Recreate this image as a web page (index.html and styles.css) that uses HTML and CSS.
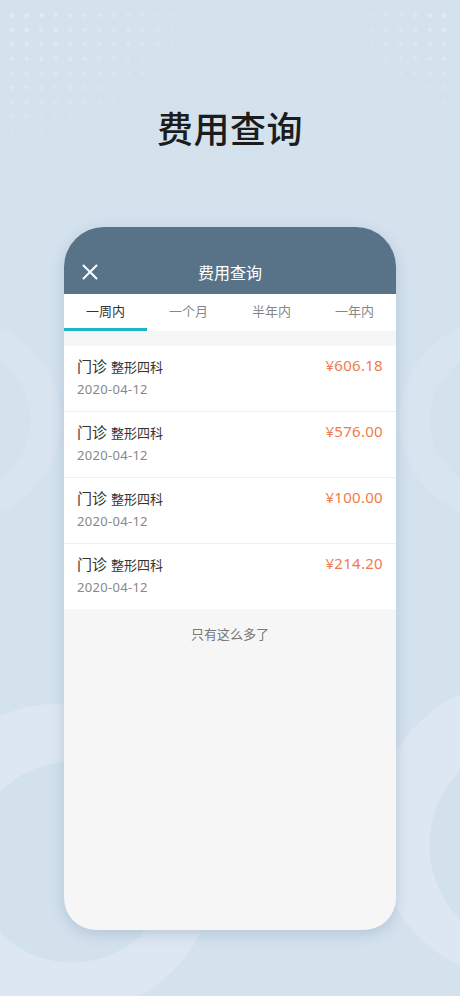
FILE: index.html
```html
<!DOCTYPE html>
<html lang="zh-CN">
<head>
<meta charset="utf-8">
<title>费用查询</title>
<link rel="stylesheet" href="styles.css">
</head>
<body>
<div class="page">
  <div class="dots dots-left"></div>
  <div class="dots dots-right"></div>
  <h1 class="hero-title">费用查询</h1>
  <div class="card">
    <div class="nav">
      <span class="nav-close">
        <svg width="16" height="16" viewBox="0 0 16 16"><path d="M1.5 1.5 L14.5 14.5 M14.5 1.5 L1.5 14.5" stroke="#fff" stroke-width="2" stroke-linecap="round" fill="none"/></svg>
      </span>
      <span class="nav-title">费用查询</span>
      <span class="nav-spacer"></span>
    </div>
    <div class="tabs">
      <div class="tab active">一周内</div>
      <div class="tab">一个月</div>
      <div class="tab">半年内</div>
      <div class="tab">一年内</div>
    </div>
    <div class="list">
      <div class="item">
        <div class="item-main">
          <div class="item-title"><span class="type">门诊</span><span class="dept">整形四科</span></div>
          <div class="item-date">2020-04-12</div>
        </div>
        <div class="price">¥606.18</div>
      </div>
      <div class="item">
        <div class="item-main">
          <div class="item-title"><span class="type">门诊</span><span class="dept">整形四科</span></div>
          <div class="item-date">2020-04-12</div>
        </div>
        <div class="price">¥576.00</div>
      </div>
      <div class="item">
        <div class="item-main">
          <div class="item-title"><span class="type">门诊</span><span class="dept">整形四科</span></div>
          <div class="item-date">2020-04-12</div>
        </div>
        <div class="price">¥100.00</div>
      </div>
      <div class="item">
        <div class="item-main">
          <div class="item-title"><span class="type">门诊</span><span class="dept">整形四科</span></div>
          <div class="item-date">2020-04-12</div>
        </div>
        <div class="price">¥214.20</div>
      </div>
    </div>
    <div class="end-note">只有这么多了</div>
  </div>
</div>
</body>
</html>
```

FILE: styles.css
```css
html, body {
  margin: 0;
  padding: 0;
}
body {
  width: 460px;
  height: 996px;
  overflow: hidden;
  font-family: "Noto Sans", "Noto Sans CJK SC", sans-serif;
  background-color: #d4e2ee;
  background-image:
    radial-gradient(circle at 72px 862px, #d3e1ed 0 100px, transparent 101px),
    radial-gradient(circle at 62px 860px, #dde7f1 0 156px, transparent 157px),
    radial-gradient(circle at 535px 845px, #d3e1ed 0 105px, transparent 106px),
    radial-gradient(circle at 525px 830px, #dde7f1 0 150px, transparent 151px),
    radial-gradient(circle at -40px 420px, #d4e2ee 0 70px, transparent 71px),
    radial-gradient(circle at -40px 420px, #d8e4ef 0 100px, transparent 101px),
    radial-gradient(circle at 500px 420px, #d4e2ee 0 70px, transparent 71px),
    radial-gradient(circle at 500px 420px, #d8e4ef 0 100px, transparent 101px);
}
.page {
  position: relative;
  display: flex;
  flex-direction: column;
  align-items: center;
  height: 996px;
}
.dots {
  position: absolute;
  top: 8px;
  background-image: radial-gradient(circle, rgba(255,255,255,0.32) 0 2px, transparent 2.5px);
  background-size: 14.5px 14.5px;
}
.dots-left {
  left: 5px;
  width: 210px;
  height: 150px;
  -webkit-mask-image: radial-gradient(ellipse at 0 0, #000 0%, rgba(0,0,0,0.45) 45%, transparent 80%);
  mask-image: radial-gradient(ellipse at 0 0, #000 0%, rgba(0,0,0,0.45) 45%, transparent 80%);
}
.dots-right {
  right: 4px;
  width: 106px;
  height: 115px;
  -webkit-mask-image: radial-gradient(ellipse at 100% 0, #000 0%, rgba(0,0,0,0.45) 45%, transparent 85%);
  mask-image: radial-gradient(ellipse at 100% 0, #000 0%, rgba(0,0,0,0.45) 45%, transparent 85%);
}
.hero-title {
  margin: 102px 0 0;
  height: 50px;
  line-height: 50px;
  font-family: "Noto Sans CJK SC", sans-serif;
  font-size: 36px;
  font-weight: 500;
  color: #1c1c1c;
  letter-spacing: 0.5px;
}
.card {
  margin-top: 75px;
  width: 332px;
  height: 703px;
  border-radius: 40px 40px 32px 32px;
  overflow: hidden;
  background: #f6f6f6;
  box-shadow: 0 4px 14px rgba(70, 100, 130, 0.22);
  display: flex;
  flex-direction: column;
}
.nav {
  height: 67px;
  box-sizing: border-box;
  padding: 25px 18px 0;
  background: #587388;
  display: flex;
  align-items: flex-start;
}
.nav-close, .nav-spacer {
  width: 40px;
  height: 40px;
  display: flex;
  align-items: center;
}
.nav-close svg {
  display: block;
}
.nav-title {
  flex: 1;
  height: 40px;
  line-height: 40px;
  text-align: center;
  color: #fff;
  font-family: "Noto Sans CJK SC", sans-serif;
  font-size: 16px;
}
.tabs {
  height: 37px;
  background: #fff;
  display: flex;
}
.tab {
  flex: 1;
  box-sizing: border-box;
  height: 37px;
  padding-top: 7px;
  line-height: 20px;
  text-align: center;
  font-family: "Noto Sans CJK SC", sans-serif;
  font-size: 13px;
  color: #888;
  border-bottom: 3px solid transparent;
}
.tab.active {
  color: #333;
  border-bottom-color: #1eb5c7;
}
.list {
  margin-top: 15px;
  background: #fff;
}
.item {
  height: 66px;
  box-sizing: border-box;
  padding: 9px 13px 0;
  display: flex;
  justify-content: space-between;
  align-items: flex-start;
  border-bottom: 1px solid #eeeeee;
}
.item:last-child {
  border-bottom: none;
  height: 65px;
}
.item-title {
  height: 21px;
  line-height: 21px;
  color: #333;
  font-family: "Noto Sans CJK SC", sans-serif;
}
.type {
  font-size: 15px;
}
.dept {
  font-size: 13px;
  margin-left: 4px;
}
.item-date {
  margin-top: 3px;
  height: 20px;
  line-height: 20px;
  font-size: 13px;
  color: #888;
  letter-spacing: 0.3px;
}
.price {
  height: 21px;
  line-height: 21px;
  font-size: 15px;
  color: #f17a4d;
  letter-spacing: 0.3px;
}
.end-note {
  margin-top: 15px;
  line-height: 20px;
  text-align: center;
  font-family: "Noto Sans CJK SC", sans-serif;
  font-size: 13px;
  color: #777;
}
```
